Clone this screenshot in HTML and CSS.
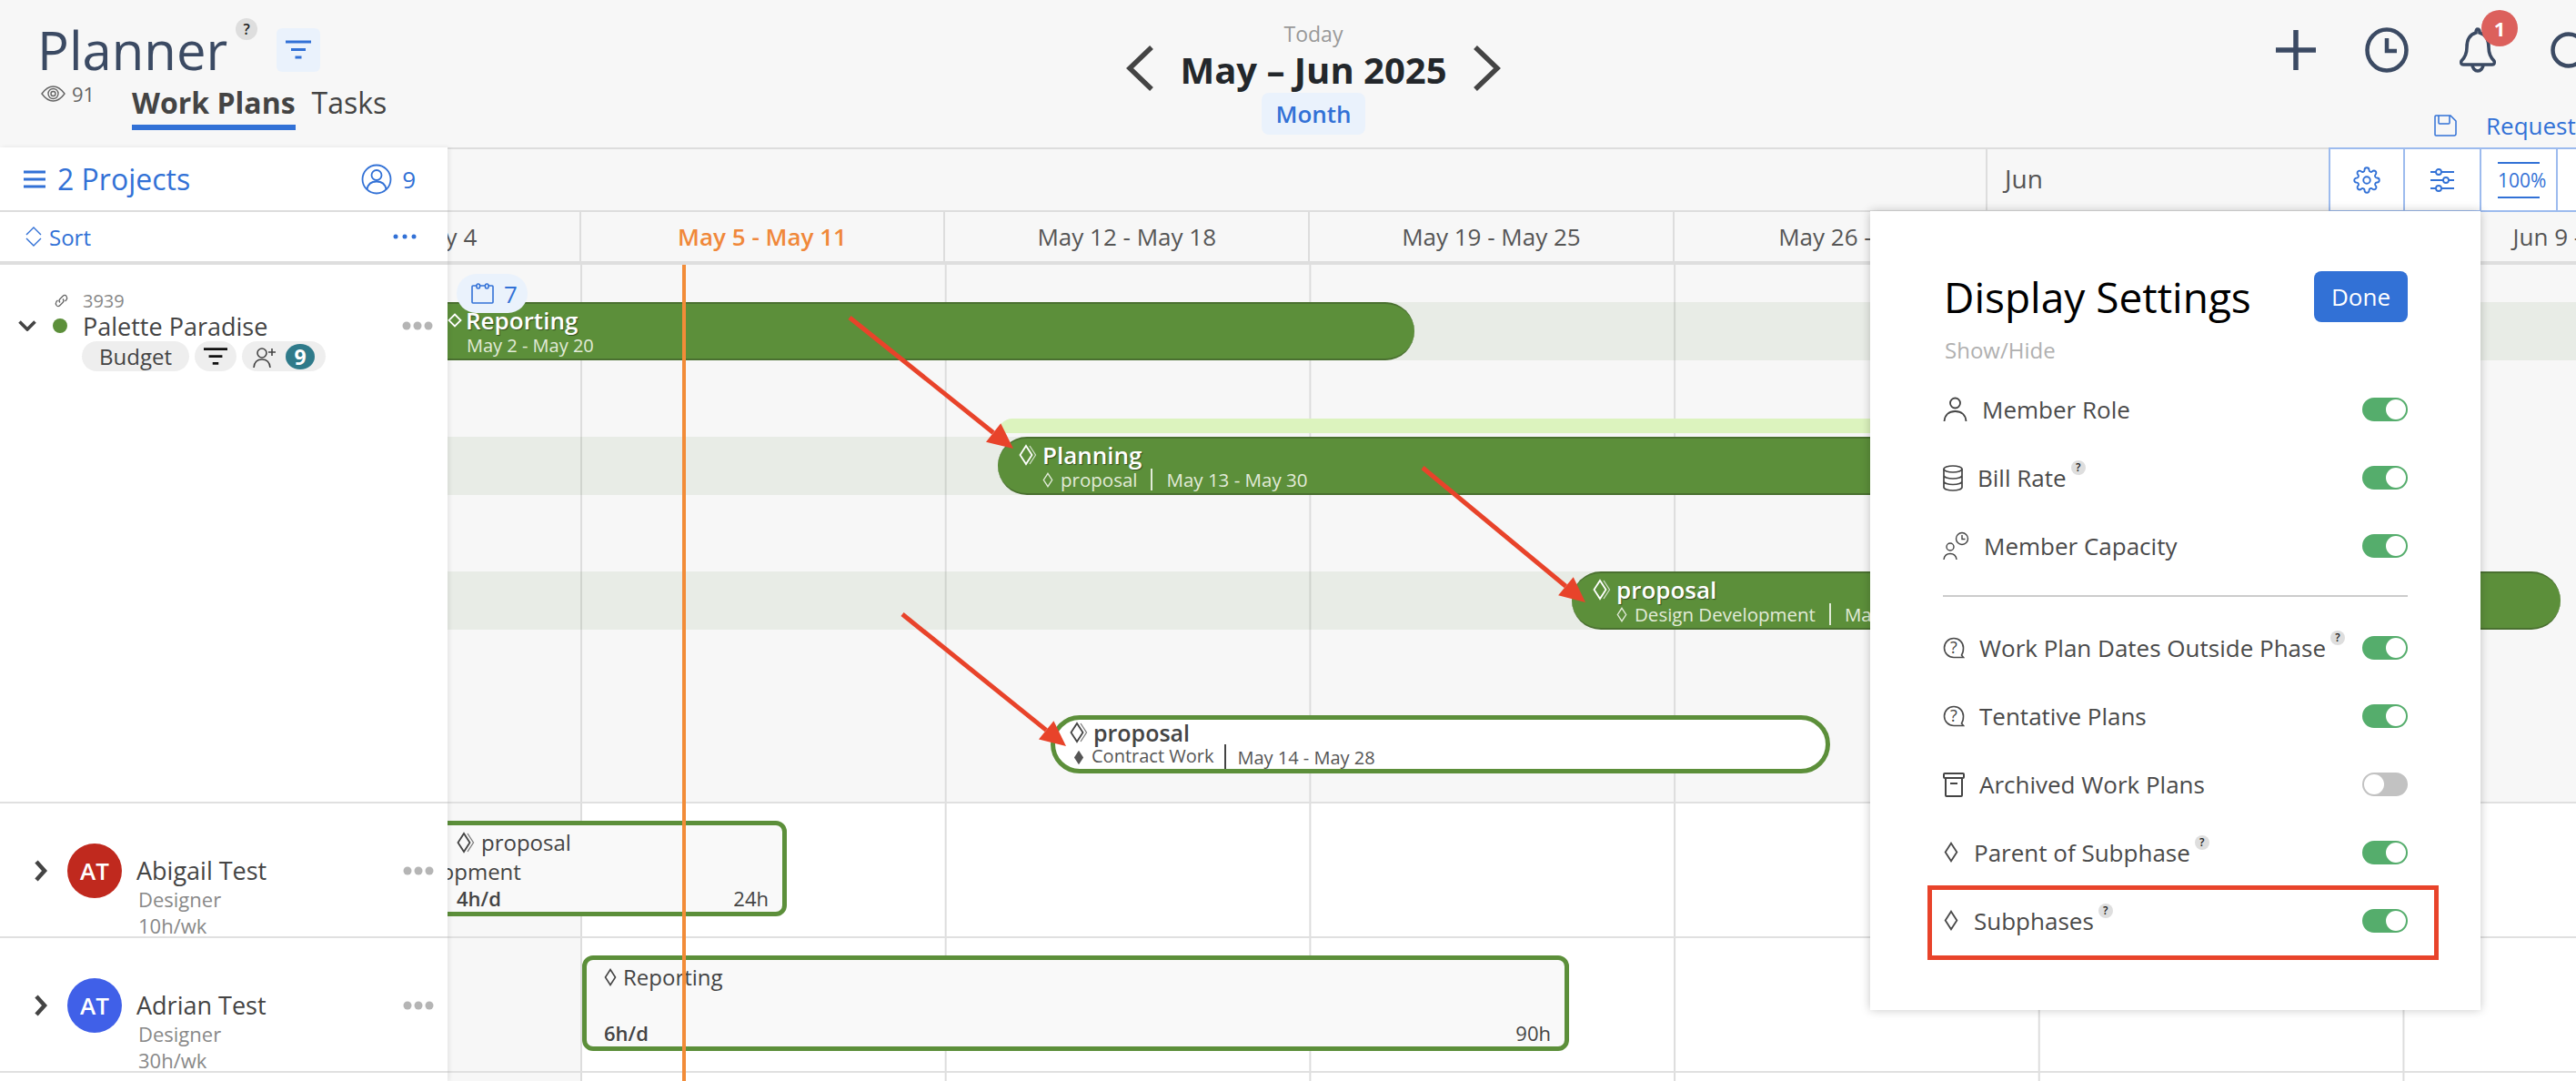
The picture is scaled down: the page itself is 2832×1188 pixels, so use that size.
FILE: index.html
```html
<!DOCTYPE html>
<html lang="en">
<head>
    <meta charset="UTF-8">
    <title>Planner</title>
    <link rel="stylesheet" href="styles.css">
</head>
<body>
    <svg class="defs" width="0" height="0">
        <symbol id="diamond" viewBox="0 0 14 20"><path d="M7 1.5 12.5 10 7 18.5 1.5 10z" fill="none" stroke="currentColor" stroke-width="1.6"/></symbol>
        <symbol id="diamond-solid" viewBox="0 0 14 20"><path d="M7 1 13 10 7 19 1 10z" fill="currentColor"/></symbol>
        <symbol id="diamond-wide" viewBox="0 0 16 16"><path d="M8 1.5 14.5 8 8 14.5 1.5 8z" fill="none" stroke="currentColor" stroke-width="1.8"/></symbol>
        <symbol id="diamond-double" viewBox="0 0 20 24"><path d="M8 2 14.5 12 8 22 1.5 12z" fill="none" stroke="currentColor" stroke-width="1.8"/><path d="M12 2 18.5 12 12 22" fill="none" stroke="currentColor" stroke-width="1.3" opacity=".7"/></symbol>
        <symbol id="dots" viewBox="0 0 34 10"><circle cx="5" cy="5" r="4.5" fill="currentColor"/><circle cx="17" cy="5" r="4.5" fill="currentColor"/><circle cx="29" cy="5" r="4.5" fill="currentColor"/></symbol>
        <symbol id="filter-lines" viewBox="0 0 28 22"><path d="M0 2h28M6 10.5h16M10.5 19h7" fill="none" stroke="currentColor" stroke-width="3"/></symbol>
        <symbol id="chevron-right" viewBox="0 0 16 26"><path d="M3 3 12 13 3 23" fill="none" stroke="currentColor" stroke-width="4.5"/></symbol>
        <symbol id="help-bubble" viewBox="0 0 24 24"><path d="M12 1.5C6 1.5 1.5 6.2 1.5 12S6 22.5 12 22.5h10.5l-2-2.5c1.500-2 2-4.500 2-8C22.500 6.200 18 1.500 12 1.500z" fill="none" stroke="currentColor" stroke-width="1.6"/><text x="12" y="18" text-anchor="middle" class="help-mark">?</text></symbol>
    </svg>

    <header class="top-bar">
        <div class="title-block">
            <div class="title-row">
                <h1>Planner</h1>
                <span class="hint hint-large">?</span>
                <button class="filter-btn"><svg width="28" height="22"><use href="#filter-lines"/></svg></button>
            </div>
            <div class="sub-row">
                <div class="views">
                    <svg width="27" height="18" viewBox="0 0 27 18" fill="none" stroke="#666" stroke-width="1.4"><path d="M1 9C5 3.5 9 1 13.5 1S22 3.5 26 9c-4 5.5-8 8-12.500 8S5 14.500 1 9z"/><circle cx="13.5" cy="9" r="5.5"/><circle cx="13.5" cy="9" r="2.5"/></svg>
                    <span>91</span>
                </div>
                <nav class="tabs">
                    <a class="tab tab-active">Work Plans</a>
                    <a class="tab">Tasks</a>
                </nav>
            </div>
        </div>

        <div class="date-nav">
            <svg class="date-arrow" width="30" height="50" viewBox="0 0 30 50" fill="none" stroke="#444" stroke-width="5.5"><path d="M28 2 4 25 28 48"/></svg>
            <div class="date-center">
                <div class="today">Today</div>
                <div class="date-range">May – Jun 2025</div>
                <div class="scale-pill">Month</div>
            </div>
            <svg class="date-arrow" width="30" height="50" viewBox="0 0 30 50" fill="none" stroke="#444" stroke-width="5.5"><path d="M2 2 26 25 2 48"/></svg>
        </div>

        <div class="right-block">
            <div class="actions">
                <div class="action"><svg width="44" height="44" viewBox="0 0 44 44" stroke="#3b4a63" stroke-width="5.5"><path d="M22 0v44M0 22h44"/></svg></div>
                <div class="action"><svg width="48" height="50" viewBox="0 0 48 50" fill="none" stroke="#3b4a63" stroke-width="4.5"><ellipse cx="24" cy="25" rx="21.5" ry="22.5"/><path d="M24 12v14h11"/></svg></div>
                <div class="action bell">
                    <svg width="42" height="50" viewBox="0 0 42 50" fill="none" stroke="#3b4a63" stroke-width="3.6"><path d="M21 2c-1.5 0-2 1.5-2 4C12 8 9 14 9 22c0 7-2 11-6 15-1 2 0 4 2 4h32c2 0 3-2 2-4-4-4-6-8-6-15 0-8-3-14-10-16 0-2.500-.5-4-2-4z"/><path d="M15 41c0 4 3 7 6 7s6-3 6-7"/></svg>
                    <span class="notify-badge">1</span>
                </div>
                <div class="action"><svg class="avatar-ring" width="44" height="40" viewBox="0 0 44 40" fill="none" stroke="#3b4a63" stroke-width="4.5"><circle cx="22" cy="20" r="17.5"/></svg></div>
            </div>
            <div class="request-row">
                <svg width="25" height="24" viewBox="0 0 25 24" fill="none" stroke="#3271d6" stroke-width="1.5"><path d="M2 1h16l6 6v14a2 2 0 0 1-2 2H2a1 1 0 0 1-1-1V2a1 1 0 0 1 1-1z"/><path d="M5 1v8a1 1 0 0 0 1 1h10a1 1 0 0 0 1-1V1"/></svg>
                <span class="request">Request</span>
            </div>
        </div>
    </header>

    <main class="planner">
        <aside class="sidebar">
            <div class="projects-row">
                <svg width="24" height="20" viewBox="0 0 24 20" stroke="#3271d6" stroke-width="3"><path d="M0 2h24M0 10h24M0 18h24"/></svg>
                <span class="projects-title">2 Projects</span>
                <div class="people-count">
                    <svg width="34" height="34" viewBox="0 0 34 34" fill="none" stroke="#3271d6" stroke-width="1.8"><circle cx="17" cy="17" r="15.5"/><circle cx="17" cy="12.5" r="5.5"/><path d="M6.5 28c1-6 5-8.5 10.5-8.5S26.5 22 27.5 28"/></svg>
                    <span>9</span>
                </div>
            </div>
            <div class="sort-row">
                <svg width="18" height="22" viewBox="0 0 18 22" fill="none" stroke="#3271d6" stroke-width="1.4"><path d="M1 9 9 1l8 8M1 13l8 8 8-8"/></svg>
                <span>Sort</span>
                <svg class="sort-more" width="26" height="6" viewBox="0 0 26 6" fill="#3271d6"><circle cx="3" cy="3" r="2.5"/><circle cx="13" cy="3" r="2.5"/><circle cx="23" cy="3" r="2.5"/></svg>
            </div>

            <div class="project-row">
                <div class="project-id">
                    <svg width="17" height="17" viewBox="0 0 17 17" fill="none" stroke="#666" stroke-width="1.3"><path d="M7 10.5c-1.5-1.5-1-3 0-4l3-3c1.5-1.5 3-1.5 4 0s1 2.500 0 4l-1.500 1.500"/><path d="M10 6.500c1.500 1.500 1 3 0 4l-3 3c-1.500 1.500-3 1.500-4 0s-1-2.500 0-4L4.500 8"/></svg>
                    <span>3939</span>
                </div>
                <div class="project-name-row">
                    <svg class="expand" width="20" height="12" viewBox="0 0 20 12" fill="none" stroke="#444" stroke-width="3.6"><path d="M1.5 1.5 10 10l8.5-8.5"/></svg>
                    <span class="status-dot"></span>
                    <span class="project-name">Palette Paradise</span>
                    <svg class="more" width="34" height="10"><use href="#dots"/></svg>
                </div>
                <div class="project-tags">
                    <span class="tag tag-budget">Budget</span>
                    <span class="tag tag-filter"><svg width="26" height="22" class="black"><use href="#filter-lines"/></svg></span>
                    <span class="tag tag-members">
                        <svg width="27" height="26" viewBox="0 0 27 26" fill="none" stroke="#444" stroke-width="1.6"><circle cx="10" cy="9" r="5"/><path d="M1 25c.5-6 4-9 9-9s8.500 3 9 9M21 4v8M17 8h8"/></svg>
                        <span class="member-count">9</span>
                    </span>
                </div>
            </div>

            <div class="member-row">
                <svg class="expand-member" width="16" height="26"><use href="#chevron-right"/></svg>
                <span class="avatar avatar-red">AT</span>
                <div class="member-info">
                    <div class="member-name">Abigail Test</div>
                    <div class="member-sub">Designer</div>
                    <div class="member-sub">10h/wk</div>
                </div>
                <svg class="more" width="34" height="10"><use href="#dots"/></svg>
            </div>
            <div class="member-row">
                <svg class="expand-member" width="16" height="26"><use href="#chevron-right"/></svg>
                <span class="avatar avatar-blue">AT</span>
                <div class="member-info">
                    <div class="member-name">Adrian Test</div>
                    <div class="member-sub">Designer</div>
                    <div class="member-sub">30h/wk</div>
                </div>
                <svg class="more" width="34" height="10"><use href="#dots"/></svg>
            </div>
        </aside>

        <section class="timeline">
            <div class="month-row">
                <div class="month month-may"></div>
                <div class="month month-jun">Jun</div>
                <div class="tools">
                    <button class="tool">
                        <svg width="30" height="30" viewBox="0 0 24 24" fill="none" stroke="#3271d6" stroke-width="1.5"><circle cx="12" cy="12" r="3"/><path d="M19.4 15a1.65 1.65 0 0 0 .33 1.82l.06.06a2 2 0 0 1 0 2.83 2 2 0 0 1-2.83 0l-.06-.06a1.65 1.65 0 0 0-1.82-.33 1.65 1.65 0 0 0-1 1.51V21a2 2 0 0 1-2 2 2 2 0 0 1-2-2v-.09A1.65 1.65 0 0 0 9 19.4a1.65 1.65 0 0 0-1.82.33l-.06.06a2 2 0 0 1-2.83 0 2 2 0 0 1 0-2.83l.06-.06a1.65 1.65 0 0 0 .33-1.82 1.65 1.65 0 0 0-1.51-1H3a2 2 0 0 1-2-2 2 2 0 0 1 2-2h.09A1.65 1.65 0 0 0 4.6 9a1.65 1.65 0 0 0-.33-1.82l-.06-.06a2 2 0 0 1 0-2.83 2 2 0 0 1 2.83 0l.06.06a1.65 1.65 0 0 0 1.82.33H9a1.65 1.65 0 0 0 1-1.51V3a2 2 0 0 1 2-2 2 2 0 0 1 2 2v.09a1.65 1.65 0 0 0 1 1.51 1.65 1.65 0 0 0 1.82-.33l.06-.06a2 2 0 0 1 2.83 0 2 2 0 0 1 0 2.83l-.06.06a1.65 1.65 0 0 0-.33 1.82V9a1.65 1.65 0 0 0 1.51 1H21a2 2 0 0 1 2 2 2 2 0 0 1-2 2h-.09a1.65 1.65 0 0 0-1.51 1z"/></svg>
                    </button>
                    <button class="tool">
                        <svg width="26" height="28" viewBox="0 0 26 28" fill="none" stroke="#3271d6" stroke-width="1.8"><path d="M0 5h6M12 5h14M0 14h14M20 14h6M0 23h6M12 23h14"/><circle cx="9" cy="5" r="3"/><circle cx="17" cy="14" r="3"/><circle cx="9" cy="23" r="3"/></svg>
                    </button>
                    <button class="tool"><span class="zoom-level">100%</span></button>
                    <button class="tool"></button>
                </div>
            </div>
            <div class="week-row">
                <div class="week">Apr 28 - May 4</div>
                <div class="week week-current">May 5 - May 11</div>
                <div class="week">May 12 - May 18</div>
                <div class="week">May 19 - May 25</div>
                <div class="week">May 26 - Jun 1</div>
                <div class="week">Jun 2 - Jun 8</div>
                <div class="week">Jun 9 - Jun 15</div>
            </div>

            <div class="project-lane">
                <div class="band band-one"></div>
                <div class="band band-two"></div>
                <div class="band band-three"></div>
                <div class="phase-top"></div>

                <div class="calendar-pill">
                    <svg width="25" height="23" viewBox="0 0 25 23" fill="none" stroke="#3271d6" stroke-width="1.6"><path d="M6 3H2a1 1 0 0 0-1 1v17a1 1 0 0 0 1 1h21a1 1 0 0 0 1-1V4a1 1 0 0 0-1-1h-4M10 3h5"/><rect x="6" y="1" width="3.5" height="5" rx="1.7"/><rect x="15.5" y="1" width="3.5" height="5" rx="1.7"/></svg>
                    <span>7</span>
                </div>

                <div class="bar bar-reporting">
                    <div class="bar-title"><svg class="icon-wide" width="16" height="16"><use href="#diamond-wide"/></svg>Reporting</div>
                    <div class="bar-sub bar-sub-reporting">May 2 - May 20</div>
                </div>
                <div class="bar bar-planning">
                    <div class="bar-title"><svg width="20" height="24"><use href="#diamond-double"/></svg>Planning</div>
                    <div class="bar-sub"><svg width="12" height="17"><use href="#diamond"/></svg>proposal<i class="sep"></i>May 13 - May 30</div>
                </div>
                <div class="bar bar-proposal">
                    <div class="bar-title"><svg width="20" height="24"><use href="#diamond-double"/></svg>proposal</div>
                    <div class="bar-sub"><svg width="12" height="17"><use href="#diamond"/></svg>Design Development<i class="sep"></i>May 13 - Jun 12</div>
                </div>
                <div class="bar bar-contract">
                    <div class="bar-title"><svg width="20" height="24"><use href="#diamond-double"/></svg>proposal</div>
                    <div class="bar-sub"><svg width="12" height="17"><use href="#diamond-solid"/></svg><span class="contract-name">Contract Work</span><i class="sep"></i>May 14 - May 28</div>
                </div>
            </div>

            <div class="member-lane">
                <div class="plan plan-proposal">
                    <div class="plan-line"><svg width="20" height="24"><use href="#diamond-double"/></svg>proposal</div>
                    <div class="plan-line plan-clipped">Design Development</div>
                    <div class="plan-foot"><b>4h/d</b><span>24h</span></div>
                </div>
            </div>
            <div class="member-lane">
                <div class="plan plan-reporting">
                    <div class="plan-line"><svg width="14" height="20"><use href="#diamond"/></svg>Reporting</div>
                    <div class="plan-line"></div>
                    <div class="plan-foot"><b>6h/d</b><span>90h</span></div>
                </div>
            </div>
            <div class="member-lane"></div>

            <div class="today-line"></div>
        </section>
    </main>

    <svg class="arrows" width="2832" height="1188" viewBox="0 0 2832 1188">
        <path d="M934 349 1092 475.5"/>
        <polygon points="1114,493 1084,485.7 1100.2,465.3"/>
        <path d="M1564 514 1721.4 644.2"/>
        <polygon points="1743,662 1713.1,654.2 1729.7,634.2"/>
        <path d="M992 675 1150.2 802.4"/>
        <polygon points="1172,820 1142,812.5 1158.4,792.3"/>
    </svg>

    <div class="settings">
        <div class="settings-head">
            <h2>Display Settings</h2>
            <button class="done">Done</button>
        </div>
        <div class="show-hide">Show/Hide</div>

        <div class="setting">
            <svg class="icon-person" width="27" height="30" viewBox="0 0 27 30" fill="none" stroke="#444" stroke-width="1.8"><circle cx="13.5" cy="8" r="5.5"/><path d="M1.5 28c.5-7 5-11 12-11s11.500 4 12 11"/></svg>
            <span>Member Role</span>
            <i class="toggle"></i>
        </div>
        <div class="setting">
            <svg class="icon-rate" width="22" height="30" viewBox="0 0 22 30" fill="none" stroke="#444" stroke-width="1.7"><ellipse cx="11" cy="5.5" rx="10" ry="3.5"/><path d="M1 5.5v20c0 2 4.500 3.500 10 3.500s10-1.500 10-3.500v-20M1 12.500c0 2 4.500 3.500 10 3.500s10-1.500 10-3.500M1 19c0 2 4.500 3.500 10 3.500S21 21 21 19"/></svg>
            <span>Bill Rate</span>
            <span class="hint">?</span>
            <i class="toggle"></i>
        </div>
        <div class="setting">
            <svg class="icon-capacity" width="29" height="32" viewBox="0 0 29 32" fill="none" stroke="#444" stroke-width="1.4"><circle cx="8" cy="17" r="4"/><path d="M1 31c.5-4 3-6.500 7-6.500s6.500 2.500 7 6.500"/><circle cx="21" cy="8" r="6.5"/><path d="M21 4v4.500h3.500"/></svg>
            <span>Member Capacity</span>
            <i class="toggle"></i>
        </div>

        <div class="settings-divider"></div>

        <div class="setting">
            <svg width="24" height="30" viewBox="0 0 24 24"><use href="#help-bubble"/></svg>
            <span>Work Plan Dates Outside Phase</span>
            <span class="hint">?</span>
            <i class="toggle"></i>
        </div>
        <div class="setting">
            <svg width="24" height="30" viewBox="0 0 24 24"><use href="#help-bubble"/></svg>
            <span>Tentative Plans</span>
            <i class="toggle"></i>
        </div>
        <div class="setting">
            <svg width="24" height="28" viewBox="0 0 24 28" fill="none" stroke="#444" stroke-width="2"><rect x="1" y="2" width="22" height="5" rx="1"/><path d="M3 7v19a1 1 0 0 0 1 1h16a1 1 0 0 0 1-1V7M8 13h8"/></svg>
            <span>Archived Work Plans</span>
            <i class="toggle toggle-off"></i>
        </div>
        <div class="setting">
            <svg class="icon-diamond" width="18" height="23"><use href="#diamond"/></svg>
            <span>Parent of Subphase</span>
            <span class="hint">?</span>
            <i class="toggle"></i>
        </div>
        <div class="setting setting-marked">
            <svg class="icon-diamond" width="18" height="23"><use href="#diamond"/></svg>
            <span>Subphases</span>
            <span class="hint">?</span>
            <i class="toggle"></i>
            <div class="red-box"></div>
        </div>
    </div>
</body>
</html>
```

FILE: styles.css
```css
* {
    box-sizing: border-box;
}
html, body {
    margin: 0;
    height: 100%;
}
body {
    position: relative;
    width: 2832px;
    height: 1188px;
    overflow: hidden;
    background-color: #f7f7f7;
    font-family: "Open Sans", "Noto Sans", sans-serif;
    color: #444;
}
button {
    font-family: inherit;
    border: none;
    padding: 0;
}
svg {
    display: block;
    flex: none;
}
.defs {
    position: absolute;
}
.help-mark {
    font-size: 18px;
    fill: #444;
}

/* top header */
.top-bar {
    display: flex;
    height: 162px;
}
.title-block {
    width: 1238px;
    padding: 27px 0 0 41px;
}
.title-row {
    display: flex;
    height: 56px;
}
h1 {
    margin: 0;
    font-size: 58px;
    line-height: 56px;
    font-weight: 500;
    color: #3b4a63;
}
.hint {
    display: flex;
    align-items: center;
    justify-content: center;
    flex: none;
    width: 16px;
    height: 16px;
    margin: 0 0 22px 5px;
    border-radius: 50%;
    background-color: #dedede;
    font-size: 12px;
    font-weight: 600;
    color: #222;
}
.hint-large {
    width: 24px;
    height: 24px;
    margin: -7px 0 0 9px;
    font-size: 16px;
}
.filter-btn {
    display: flex;
    align-items: center;
    justify-content: center;
    width: 48px;
    height: 48px;
    margin: 4px 0 0 21px;
    border-radius: 6px;
    background-color: #eaf2fc;
    color: #3271d6;
}
.sub-row {
    display: flex;
    margin-top: 8px;
}
.views {
    display: flex;
    align-items: center;
    gap: 7px;
    width: 104px;
    height: 24px;
    padding-left: 4px;
    font-size: 22px;
    color: #666;
}
.tabs {
    display: flex;
    gap: 18px;
    margin-top: 6px;
}
.tab {
    height: 46px;
    font-size: 32px;
    line-height: 32px;
    color: #444;
}
.tab-active {
    font-weight: 700;
    border-bottom: 6px solid #3271d6;
}

.date-nav {
    display: flex;
    width: 412px;
    padding-top: 22px;
}
.date-arrow {
    margin-top: 28px;
}
.date-center {
    flex: 1;
    display: flex;
    flex-direction: column;
    align-items: center;
}
.today {
    font-size: 23px;
    line-height: 30px;
    color: #999;
}
.date-range {
    font-size: 40px;
    line-height: 50px;
    font-weight: 700;
    color: #23272b;
}
.scale-pill {
    width: 114px;
    height: 46px;
    border-radius: 8px;
    background-color: #eaf2fc;
    text-align: center;
    font-size: 26px;
    line-height: 46px;
    font-weight: 600;
    color: #3271d6;
}

.right-block {
    flex: 1;
    min-width: 0;
    overflow: hidden;
}
.actions {
    display: flex;
    height: 50px;
    margin-top: 30px;
    padding-left: 824px;
}
.action {
    position: relative;
    display: flex;
    justify-content: center;
    align-items: center;
    flex: none;
    width: 100px;
}
.notify-badge {
    position: absolute;
    left: 54px;
    top: -19px;
    width: 40px;
    height: 40px;
    border-radius: 50%;
    background-color: #dc605c;
    text-align: center;
    font-size: 22px;
    line-height: 40px;
    font-weight: 700;
    color: #fff;
}
.request-row {
    display: flex;
    align-items: center;
    gap: 32px;
    height: 36px;
    margin-top: 40px;
    padding-left: 1026px;
}
.request {
    font-size: 26px;
    font-weight: 500;
    color: #3271d6;
    white-space: nowrap;
}

/* planner body */
.planner {
    display: flex;
    height: 1026px;
}
.sidebar {
    position: relative;
    z-index: 2;
    width: 492px;
    flex: none;
    background-color: #fff;
    box-shadow: 2px 0 5px rgba(0, 0, 0, 0.08);
}
.projects-row {
    display: flex;
    align-items: center;
    height: 71px;
    padding: 0 35px 0 26px;
    border-bottom: 2px solid #ddd;
    color: #3271d6;
}
.projects-title {
    margin-left: 13px;
    font-size: 32px;
    font-weight: 500;
}
.people-count {
    display: flex;
    align-items: center;
    gap: 11px;
    margin-left: auto;
    font-size: 26px;
}
.sort-row {
    display: flex;
    align-items: center;
    gap: 8px;
    height: 58px;
    padding: 0 34px 0 28px;
    border-bottom: 4px solid #dedede;
    font-size: 24px;
    color: #3271d6;
}
.sort-more {
    margin-left: auto;
}
.project-row {
    height: 592px;
    padding-top: 27px;
    border-bottom: 2px solid #e0e0e0;
}
.project-id {
    display: flex;
    align-items: center;
    gap: 15px;
    height: 24px;
    padding-left: 59px;
    font-size: 20px;
    color: #888;
}
.project-name-row {
    display: flex;
    align-items: center;
    height: 32px;
    padding: 0 16px 0 20px;
}
.expand {
    margin-right: 18px;
}
.status-dot {
    width: 16px;
    height: 16px;
    margin-right: 17px;
    border-radius: 50%;
    background-color: #5c8f3a;
}
.project-name {
    font-size: 27px;
    font-weight: 500;
}
.more {
    margin-left: auto;
    color: #b5b5b5;
}
.project-tags {
    display: flex;
    gap: 6px;
    margin: 1px 0 0 90px;
}
.tag {
    display: flex;
    align-items: center;
    justify-content: center;
    height: 33px;
    border-radius: 17px;
    background-color: #eee;
    font-size: 24px;
}
.tag-budget {
    width: 118px;
}
.tag-filter {
    width: 46px;
}
.black {
    color: #111;
}
.tag-members {
    width: 92px;
    gap: 9px;
}
.member-count {
    width: 32px;
    height: 28px;
    border-radius: 50%;
    background-color: #2f7a8a;
    text-align: center;
    font-size: 23px;
    line-height: 28px;
    font-weight: 700;
    color: #fff;
}
.member-row {
    display: flex;
    align-items: flex-start;
    height: 148px;
    padding: 44px 15px 0 37px;
    border-bottom: 2px solid #e0e0e0;
}
.expand-member {
    margin-top: 17px;
    color: #444;
}
.avatar {
    flex: none;
    width: 60px;
    height: 60px;
    margin-left: 21px;
    border-radius: 50%;
    text-align: center;
    font-size: 26px;
    line-height: 60px;
    font-weight: 600;
    color: #fff;
}
.avatar-red {
    background-color: #c0291e;
}
.avatar-blue {
    background-color: #4060e8;
}
.member-info {
    margin: 13px 0 0 16px;
}
.member-name {
    font-size: 27px;
    line-height: 34px;
    font-weight: 500;
}
.member-sub {
    padding-left: 2px;
    font-size: 22px;
    line-height: 29px;
    color: #888;
}
.member-row .more {
    margin-top: 25px;
}

/* timeline */
.timeline {
    position: relative;
    flex: 1;
    min-width: 0;
    overflow: hidden;
}
.month-row {
    display: flex;
    height: 71px;
    border-top: 2px solid #ddd;
    border-bottom: 2px solid #ddd;
}
.month-may {
    flex: none;
    width: 1691px;
}
.month-jun {
    flex: none;
    width: 377px;
    padding-left: 19px;
    border-left: 2px solid #ddd;
    font-size: 28px;
    line-height: 64px;
    color: #555;
}
.tools {
    display: flex;
    flex: none;
    height: 71px;
    margin-top: -2px;
}
.tool {
    display: flex;
    align-items: center;
    justify-content: center;
    flex: none;
    width: 84px;
    background-color: #fff;
    border: 2px solid #9dbbee;
    border-left-width: 0;
}
.tool:first-child {
    border-left-width: 2px;
}
.zoom-level {
    width: 46px;
    padding: 5px 0;
    border-top: 2px solid #3271d6;
    border-bottom: 2px solid #3271d6;
    font-size: 21px;
    line-height: 26px;
    color: #3271d6;
    white-space: nowrap;
}
.week-row {
    display: flex;
    width: 3200px;
    height: 58px;
    margin-left: -254px;
    border-bottom: 4px solid #dedede;
}
.week {
    flex: none;
    width: 400.7px;
    border-right: 2px solid #ddd;
    text-align: center;
    font-size: 26px;
    line-height: 54px;
    color: #555;
}
.week-current {
    font-weight: 600;
    color: #f0883a;
}
.project-lane,
.member-lane {
    position: relative;
    background-image: linear-gradient(to right, #ddd 2px, transparent 2px);
    background-size: 400.7px 100%;
    background-position: 146px 0;
}
.project-lane {
    height: 592px;
    border-bottom: 2px solid #e0e0e0;
}
.member-lane {
    height: 148px;
    border-bottom: 2px solid #e0e0e0;
    background-color: #fff;
    background-image: linear-gradient(to right, #ddd 2px, transparent 2px), linear-gradient(#f7f7f7, #f7f7f7);
    background-size: 400.7px 100%, 146px 100%;
    background-position: 146px 0, 0 0;
    background-repeat: repeat-x, no-repeat;
}
.today-line {
    position: absolute;
    left: 258px;
    top: 129px;
    bottom: 0;
    width: 4px;
    background-color: #f28c38;
}
.band {
    position: absolute;
    left: 0;
    height: 64px;
    background-color: rgba(70, 110, 40, 0.08);
}
.band-one {
    top: 41px;
    right: 0;
}
.band-two {
    top: 189px;
    width: 700px;
}
.band-three {
    top: 337px;
    width: 1300px;
}
.phase-top {
    position: absolute;
    left: 605px;
    top: 169px;
    width: 1400px;
    height: 16px;
    border-radius: 16px 0 0 0;
    background-color: #dcf3be;
}
.calendar-pill {
    position: absolute;
    z-index: 1;
    left: 10px;
    top: 10px;
    display: flex;
    align-items: center;
    gap: 11px;
    width: 78px;
    height: 43px;
    padding-left: 16px;
    border-radius: 22px;
    background-color: #eaf2fc;
    font-size: 26px;
    color: #3271d6;
}
.bar {
    position: absolute;
    height: 64px;
    border-radius: 32px;
    padding-top: 4px;
    border-top: 2px solid #4a7030;
    border-bottom: 2px solid #4a7030;
    background-color: #5c8f3a;
    color: #fff;
    overflow: hidden;
    white-space: nowrap;
}
.bar-title {
    display: flex;
    align-items: center;
    gap: 6px;
    height: 28px;
    font-size: 26px;
    line-height: 28px;
    font-weight: 600;
    text-shadow: 1px 1px 1px rgba(0, 0, 0, 0.45);
}
.bar-sub {
    display: flex;
    align-items: center;
    height: 26px;
    font-size: 20.5px;
    color: #e2ebd9;
}
.bar-sub svg {
    margin-right: 8px;
}
.sep {
    width: 2px;
    height: 24px;
    margin: 0 15px;
    background-color: currentColor;
}
.bar-reporting {
    left: -40px;
    top: 41px;
    width: 1103px;
    padding-left: 40px;
}
.bar-reporting .bar-title {
    gap: 4px;
}
.bar-sub-reporting {
    padding-left: 21px;
    font-size: 20px;
}
.bar-planning {
    left: 605px;
    top: 189px;
    width: 1400px;
    padding-left: 23px;
}
.bar-planning .bar-sub,
.bar-proposal .bar-sub {
    padding-left: 26px;
}
.bar-proposal {
    left: 1236px;
    top: 337px;
    width: 1087px;
    padding-left: 23px;
}
.bar-contract {
    left: 663px;
    top: 495px;
    width: 857px;
    padding: 0 0 0 16px;
    border: 5px solid #5c8f3a;
    background-color: #fff;
    color: #444;
}
.bar-contract .bar-title {
    font-size: 25px;
    font-weight: 600;
    text-shadow: none;
}
.bar-contract .bar-sub {
    padding-left: 4px;
    font-size: 20px;
    color: #555;
}
.bar-contract .sep {
    height: 28px;
    margin: 0 12px;
    background-color: #444;
}
.contract-name {
    margin-top: -4px;
}
.plan {
    position: absolute;
    top: 19px;
    height: 105px;
    padding: 3px 15px 0 25px;
    border: 5px solid #5c8f3a;
    border-radius: 12px;
    background-color: #f9f9f9;
    font-size: 24px;
    white-space: nowrap;
}
.plan-proposal {
    left: -20px;
    width: 393px;
}
.plan-reporting {
    left: 148px;
    width: 1085px;
    padding-left: 19px;
}
.plan-line {
    display: flex;
    align-items: center;
    gap: 7px;
    height: 32px;
    line-height: 32px;
}
.plan-clipped {
    margin-left: -162px;
}
.plan-foot {
    display: flex;
    justify-content: space-between;
    height: 26px;
    font-size: 22px;
    line-height: 26px;
}
.plan-foot b {
    font-weight: 600;
}

/* annotation arrows */
.arrows {
    position: absolute;
    z-index: 3;
    left: 0;
    top: 0;
}
.arrows path {
    fill: none;
    stroke: #e8432a;
    stroke-width: 5;
}
.arrows polygon {
    fill: #e8432a;
}

/* display settings popup */
.settings {
    position: absolute;
    z-index: 5;
    left: 2056px;
    top: 232px;
    width: 671px;
    height: 878px;
    padding: 63px 80px 0;
    background-color: #fff;
    box-shadow: 0 0 10px rgba(0, 0, 0, 0.22);
}
.settings-head {
    display: flex;
    align-items: center;
    justify-content: space-between;
    padding-left: 1px;
}
h2 {
    margin: 0;
    font-size: 46px;
    font-weight: 500;
    color: #000;
}
.done {
    width: 103px;
    height: 56px;
    border-radius: 8px;
    background-color: #3271d6;
    font-size: 26px;
    font-weight: 500;
    color: #fff;
}
.show-hide {
    margin: 13px 0 12px 2px;
    font-size: 24px;
    line-height: 30px;
    color: #b0b0b0;
}
.setting {
    position: relative;
    display: flex;
    align-items: center;
    gap: 16px;
    height: 75px;
    font-size: 26px;
    color: #4a4a4a;
}
.setting .hint {
    margin-left: -11px;
}
.toggle {
    display: flex;
    justify-content: flex-end;
    width: 50px;
    height: 26px;
    margin-left: auto;
    border: 2px solid #55ad6c;
    border-radius: 13px;
    background-color: #55ad6c;
}
.toggle::after {
    content: "";
    width: 22px;
    height: 22px;
    border-radius: 50%;
    background-color: #fff;
}
.toggle-off {
    justify-content: flex-start;
    border-color: #c2c2c2;
    background-color: #c2c2c2;
}
.settings-divider {
    height: 2px;
    margin: 17px 0 18px;
    background-color: #ccc;
}
.red-box {
    position: absolute;
    left: -17px;
    right: -34px;
    top: -1px;
    height: 82px;
    border: 5px solid #e8432a;
}
```
